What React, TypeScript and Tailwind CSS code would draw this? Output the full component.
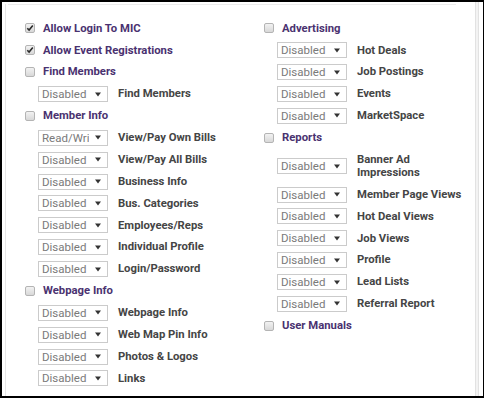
import React from "react";

type Row =
  | { kind: "check"; label: string; checked?: boolean }
  | { kind: "select"; value: string; label: string };

const left: Row[] = [
  { kind: "check", label: "Allow Login To MIC", checked: true },
  { kind: "check", label: "Allow Event Registrations", checked: true },
  { kind: "check", label: "Find Members" },
  { kind: "select", value: "Disabled", label: "Find Members" },
  { kind: "check", label: "Member Info" },
  { kind: "select", value: "Read/Write", label: "View/Pay Own Bills" },
  { kind: "select", value: "Disabled", label: "View/Pay All Bills" },
  { kind: "select", value: "Disabled", label: "Business Info" },
  { kind: "select", value: "Disabled", label: "Bus. Categories" },
  { kind: "select", value: "Disabled", label: "Employees/Reps" },
  { kind: "select", value: "Disabled", label: "Individual Profile" },
  { kind: "select", value: "Disabled", label: "Login/Password" },
  { kind: "check", label: "Webpage Info" },
  { kind: "select", value: "Disabled", label: "Webpage Info" },
  { kind: "select", value: "Disabled", label: "Web Map Pin Info" },
  { kind: "select", value: "Disabled", label: "Photos & Logos" },
  { kind: "select", value: "Disabled", label: "Links" },
];

const right: Row[] = [
  { kind: "check", label: "Advertising" },
  { kind: "select", value: "Disabled", label: "Hot Deals" },
  { kind: "select", value: "Disabled", label: "Job Postings" },
  { kind: "select", value: "Disabled", label: "Events" },
  { kind: "select", value: "Disabled", label: "MarketSpace" },
  { kind: "check", label: "Reports" },
  { kind: "select", value: "Disabled", label: "Banner Ad Impressions" },
  { kind: "select", value: "Disabled", label: "Member Page Views" },
  { kind: "select", value: "Disabled", label: "Hot Deal Views" },
  { kind: "select", value: "Disabled", label: "Job Views" },
  { kind: "select", value: "Disabled", label: "Profile" },
  { kind: "select", value: "Disabled", label: "Lead Lists" },
  { kind: "select", value: "Disabled", label: "Referral Report" },
  { kind: "check", label: "User Manuals" },
];

function Box({ checked }: { checked?: boolean }) {
  return (
    <span className="relative flex h-[10px] w-[10px] shrink-0 items-center justify-center rounded-[2px] border border-[#b4b4b4] bg-gradient-to-b from-[#f2f2f2] to-[#d8d8d8]">
      {checked && (
        <svg width="8" height="8" viewBox="0 0 8 8" className="absolute">
          <path d="M1.3 4.2 L3.1 6 L6.8 1.6" fill="none" stroke="#2a2a2a" strokeWidth="1.6" />
        </svg>
      )}
    </span>
  );
}

function Select({ value }: { value: string }) {
  return (
    <div className="flex h-[16px] w-[70px] shrink-0 items-center border border-[#cbcbcb] bg-white">
      <span className="w-[50px] overflow-hidden whitespace-nowrap pl-[3px] text-[11.5px] leading-[14px] text-[#7a7a7a]">
        {value}
      </span>
      <svg width="6" height="5" viewBox="0 0 6 5" className="ml-[6px]">
        <path d="M0 0.5 H6 L3 4.5 Z" fill="#333" />
      </svg>
    </div>
  );
}

function Column({ rows, labelW }: { rows: Row[]; labelW: string }) {
  return (
    <div className="flex flex-col">
      {rows.map((r, i) =>
        r.kind === "check" ? (
          <div key={i} className="flex min-h-[21.875px] items-center gap-[8px]">
            <Box checked={r.checked} />
            <span className="text-[11.3px] font-bold leading-[13.4px] text-[#4a3270]">{r.label}</span>
          </div>
        ) : (
          <div key={i} className="flex min-h-[21.875px] items-center gap-[10px] pl-[13px]">
            <Select value={r.value} />
            <span className={`${labelW} py-[4px] text-[11.3px] font-bold leading-[13.4px] text-[#454545]`}>
              {r.label}
            </span>
          </div>
        )
      )}
    </div>
  );
}

export default function App() {
  return (
    <div
      className="relative h-[398px] w-[484px] overflow-hidden border-2 border-r border-black bg-white"
      style={{ fontFamily: "Roboto, 'Noto Sans', sans-serif" }}
    >
      <div className="absolute left-[3px] top-[2px] h-[392px] w-px bg-[#e6e6e6]" />
      <div className="absolute left-[6px] top-[2px] h-px w-[448px] bg-[#ececec]" />
      <div className="absolute right-[4px] top-0 h-full w-[4px] border-x border-[#e2e2e2] bg-[#f3f3f3]" />
      <div className="grid grid-cols-[239px_1fr] pl-[23px] pt-[15.5px]">
        <Column rows={left} labelW="" />
        <Column rows={right} labelW="max-w-[112px]" />
      </div>
    </div>
  );
}
